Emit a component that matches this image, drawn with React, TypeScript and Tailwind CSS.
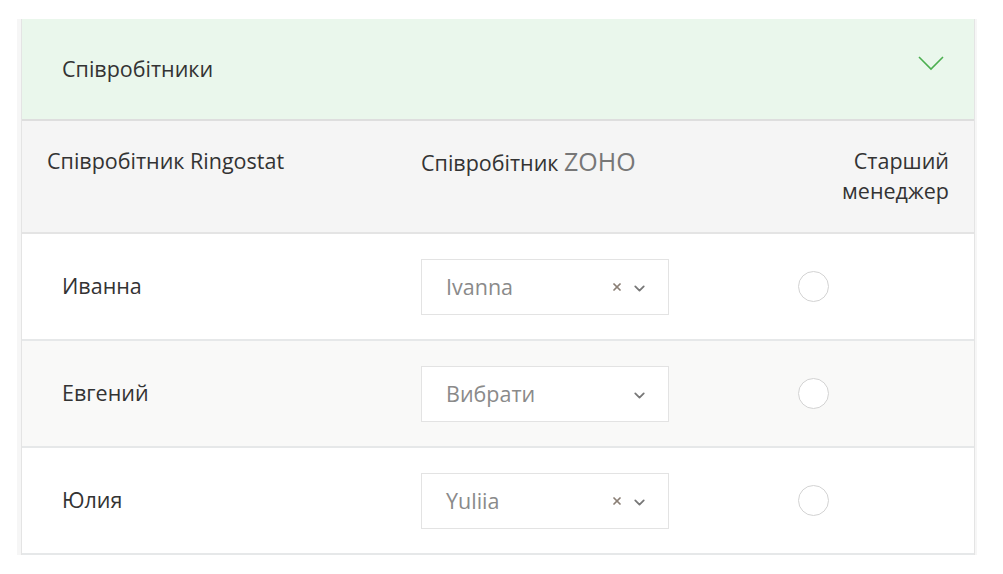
import { ChevronDown, X } from "lucide-react";

const ROWS = [
  { name: "Иванна", value: "Ivanna", selected: true, bg: "bg-white" },
  { name: "Евгений", value: "Вибрати", selected: false, bg: "bg-[#f9f9f8]" },
  { name: "Юлия", value: "Yuliia", selected: true, bg: "bg-white" },
];

function Select({ value, selected }: { value: string; selected: boolean }) {
  return (
    <div className="flex h-[56px] w-[248px] items-center border border-[#e3e3e3] bg-white pl-[24px] pr-[20px]">
      <span className="mt-[2px] flex-1 text-[21.5px] text-[#8a8a8a]">{value}</span>
      {selected && <X className="mr-[8px] h-[12px] w-[12px] text-[#8a7f75]" strokeWidth={3.5} />}
      <ChevronDown className="mt-[3px] h-[17px] w-[17px] text-[#777]" strokeWidth={2.5} />
    </div>
  );
}

export default function App() {
  return (
    <div className="min-h-[574px] bg-white pt-[19px] pl-[17px] font-['Open_Sans',sans-serif] text-[#333]">
      <div className="w-[960px] bg-[#f6f6f6] pl-[4px] pr-[2px]">
        <div className="border-x border-[#e4e4e4]">
          {/* Section header */}
          <div className="flex h-[102px] items-center justify-between border-b-2 border-[#dedede] bg-[#eaf7ec] pl-[40px] pr-[30px]">
            <span className="text-[21.5px]">Співробітники</span>
            <svg width="26" height="16" viewBox="0 0 26 16" className="mb-[10px]">
              <path d="M1 1 L13 13 L25 1" fill="none" stroke="#4caf50" strokeWidth="1.6" />
            </svg>
          </div>

          {/* Column headings */}
          <div className="flex h-[113px] border-b-2 border-[#e4e4e4] bg-[#f5f5f5] pt-[25px] text-[21.5px] leading-[30px]">
            <div className="w-[399px] pl-[25px]">Співробітник Ringostat</div>
            <div className="flex-1">
              Співробітник <span className="text-[25px] text-[#777]">ZOHO</span>
            </div>
            <div className="pr-[25px] text-right">
              Старший
              <br />
              менеджер
            </div>
          </div>

          {/* Rows */}
          {ROWS.map((r) => (
            <div
              key={r.name}
              className={`flex h-[107px] items-center border-b-2 border-[#e6e8e9] ${r.bg}`}
            >
              <div className="w-[399px] pl-[40px] text-[21.5px]">{r.name}</div>
              <Select value={r.value} selected={r.selected} />
              <div className="ml-[129px] h-[31px] w-[31px] rounded-full border border-[#d3d3d3] bg-white" />
            </div>
          ))}
        </div>
      </div>
    </div>
  );
}
